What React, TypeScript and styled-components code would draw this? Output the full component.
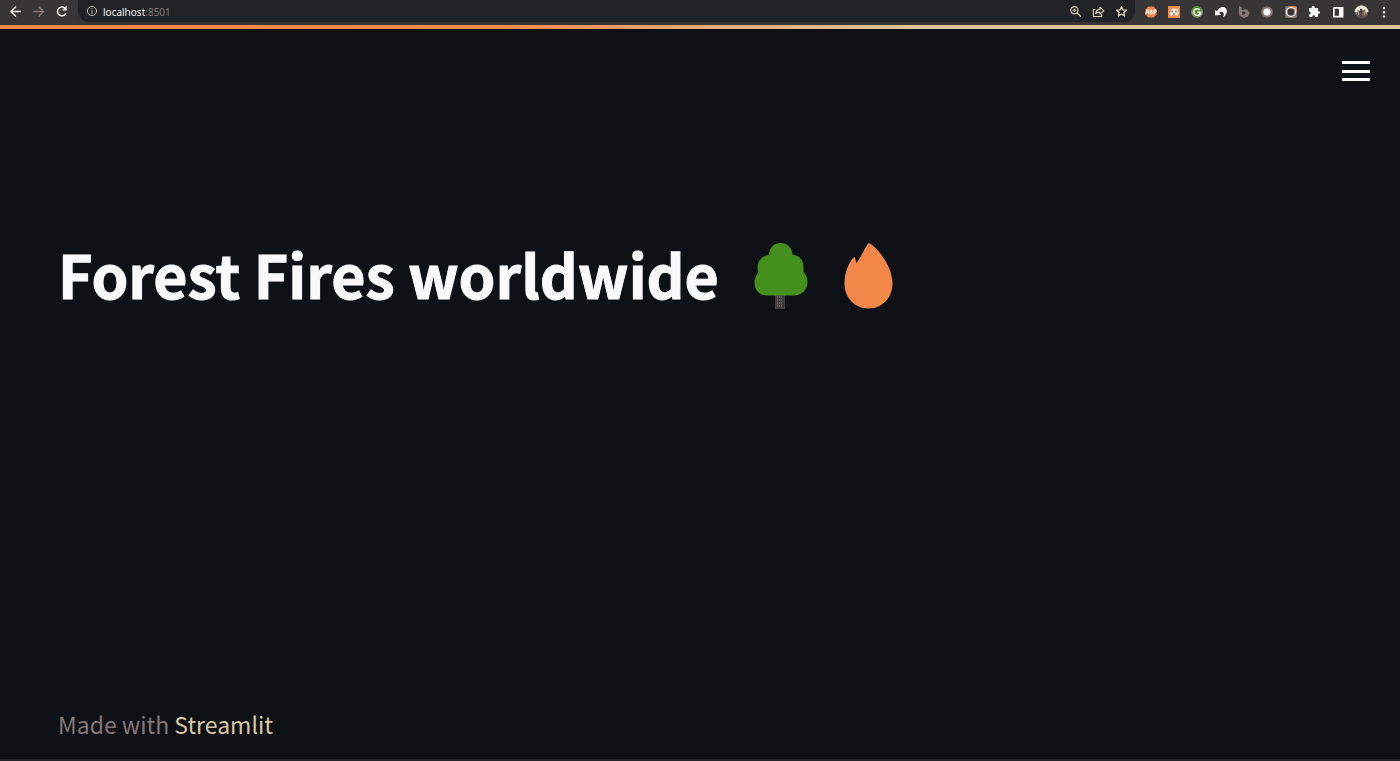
import React from "react";
import styled, { createGlobalStyle } from "styled-components";

const GlobalStyle = createGlobalStyle`
  * { box-sizing: border-box; }
  body { margin: 0; background: #0d1116; }
`;

const Page = styled.div`
  display: flex;
  flex-direction: column;
  min-height: 100vh;
  background: #0d1116;
  border-bottom: 2px solid #222327;
  font-family: "Noto Sans CJK SC", "Noto Sans", sans-serif;
`;

const BrowserBar = styled.header`
  display: flex;
  align-items: flex-start;
  height: 25px;
  background: #373536;
`;

const Navigation = styled.nav`
  display: flex;
  gap: 8px;
  padding: 4px 9px 4px 8px;
`;

const IconButton = styled.button<{ $muted?: boolean }>`
  display: flex;
  align-items: center;
  justify-content: center;
  flex: none;
  width: 15px;
  height: 15px;
  padding: 0;
  border: 0;
  background: none;
  color: ${(p) => (p.$muted ? "#857774" : "#f4f0e8")};
  cursor: pointer;

  svg { display: block; }
`;

const AddressBar = styled.div`
  display: flex;
  align-items: center;
  flex: 1;
  height: 22px;
  padding: 0 6px 0 8px;
  border-radius: 0 0 11px 11px;
  background: #202226;
  color: #d9cdb4;
`;

const SiteInfo = styled.span`
  display: flex;
  width: 12px;
  margin-right: 5px;
  color: #c4bbb0;
`;

const Url = styled.div`
  flex: 1;
  padding-top: 1px;
  font-family: "Noto Sans", "Open Sans", sans-serif;
  font-size: 10px;
  line-height: 14px;
  color: #857774;

  strong { font-weight: 400; color: #f7f5f0; }
`;

const AddressActions = styled.div`
  display: flex;
  gap: 8px;

  button { color: #e3d5b8; }
`;

const Extensions = styled.div`
  display: flex;
  justify-content: space-between;
  width: 265px;
  padding: 4px 8px;
`;

const AccentLine = styled.div`
  height: 4px;
  background: linear-gradient(90deg, #f58549 0%, #f28a50 36%, #e9a873 50%, #dcc79c 66%, #dcc79c 100%);
`;

const Toolbar = styled.div`
  display: flex;
  justify-content: flex-end;
  padding: 32px 30px 0;
`;

const MenuButton = styled.button`
  display: flex;
  flex-direction: column;
  justify-content: space-between;
  width: 28px;
  height: 20px;
  padding: 0;
  border: 0;
  background: none;
  cursor: pointer;
`;

const MenuStroke = styled.span`
  height: 3px;
  background: #fafafa;
`;

const Main = styled.main`
  flex: 1;
  padding: 151px 58px 0;
`;

const Title = styled.h1`
  display: flex;
  align-items: flex-start;
  margin: 0;
  color: #fafafc;
  font-size: 59px;
  font-weight: 700;
  line-height: 84px;
  -webkit-text-stroke: 1px #fafafc;

  svg { flex: none; }
`;

const TitleIcons = styled.span`
  display: flex;
  gap: 36px;
  padding-top: 11px;
  margin-left: 35px;
`;

const Footer = styled.footer`
  padding: 0 58px 17px;
  color: #857774;
  font-size: 23px;
  line-height: 36px;

  a { color: #dcc79c; text-decoration: none; }
`;

const stroke = {
  fill: "none",
  stroke: "currentColor",
  strokeWidth: 1.5,
  strokeLinecap: "round" as const,
  strokeLinejoin: "round" as const,
};

const BackIcon = () => (
  <svg width="15" height="15" viewBox="0 0 15 15" {...stroke}><path d="M12.5 7.5H3M7.5 3 3 7.5 7.5 12" /></svg>
);
const ForwardIcon = () => (
  <svg width="15" height="15" viewBox="0 0 15 15" {...stroke}><path d="M3 7.5h9M8 3l4.5 4.5L8 12" /></svg>
);
const ReloadIcon = () => (
  <svg width="15" height="15" viewBox="0 0 15 15" {...stroke}>
    <path d="M11.5 10A4.4 4.4 0 1 1 11 4.3L12 5.5" /><path d="M12.4 2.2v4H8.6z" fill="currentColor" strokeWidth=".4" />
  </svg>
);
const InfoIcon = () => (
  <svg width="12" height="12" viewBox="0 0 12 12" {...stroke} strokeWidth="1"><circle cx="6" cy="6" r="4.6" /><path d="M6 5.5v3M6 3.4v.3" /></svg>
);
const ZoomIcon = () => (
  <svg width="13" height="13" viewBox="0 0 13 13" {...stroke} strokeWidth="1.1"><circle cx="5.4" cy="5.2" r="3.6" /><path d="m8.2 8 3.4 3.4M3.9 5.2h3M5.4 3.7v3" /></svg>
);
const ShareIcon = () => (
  <svg width="13" height="13" viewBox="0 0 13 13" {...stroke} strokeWidth="1.1"><path d="M3 4.5H1.4v7h8.3V9.6M3.7 8.7c.3-2.8 1.6-4.2 4.2-4.3V2.2l3.9 3.6-3.9 3.4V7.1c-1.9 0-3.1.4-4.2 1.6z" /></svg>
);
const StarIcon = () => (
  <svg width="13" height="13" viewBox="0 0 13 13" {...stroke} strokeWidth="1.2"><path d="m6.5 1.5 1.4 3.3 3.6.3-2.7 2.4.8 3.5-3.1-1.9L3.4 11l.8-3.5-2.7-2.4 3.6-.3z" /></svg>
);
const AdblockIcon = () => (
  <svg width="14" height="14" viewBox="0 0 14 14">
    <path d="M4.5 1.5h5l3 3v5l-3 3h-5l-3-3v-5z" fill="#f58549" />
    <path d="M1.5 9.200 3 5h1l.6 4.200M2.300 7.600h2M6 9V5.200h1.400q1 .9 0 1.800H6h1.600q1 1 0 2zM10 9.200V5.200h1.500q1.400 1.100 0 2.200H10" fill="none" stroke="#f3e7d5" strokeWidth="1.200" />
  </svg>
);
const FoxIcon = () => (
  <svg width="14" height="14" viewBox="0 0 14 14">
    <path d="M1 1h12v12H1z" fill="#f58549" />
    <path d="m3 2.500 1 2h1L6 3l1.500 1L9 3l1 1.500L11.500 3l-.5 3 1 2-1.500 1.500v2L8 10H6l-2.500 1.500.3-2L2.500 8 4 6z" fill="#f7eee2" />
    <path d="M5 5.500v2M9 5.500v2M6 9h2" stroke="#a3522f" strokeWidth="1.200" />
  </svg>
);
const GreenIcon = () => (
  <svg width="14" height="14" viewBox="0 0 14 14">
    <circle cx="7" cy="7" r="5.8" fill="#a99c94" /><path d="M2 4a5.8 5.8 0 0 1 8-2l2 3-4 8-5-2z" fill="#458f1d" />
    <path d="M9.8 4.8A3.4 3.4 0 1 0 10 9V7.3H7.3" fill="none" stroke="#fafafa" strokeWidth="1.5" />
  </svg>
);
const SwoopIcon = () => (
  <svg width="14" height="14" viewBox="0 0 14 14">
    <path d="M1 10.500V5l2 1.300C5.200 1.800 10 .8 12 3.600c1.800 3 .6 7-3 8.700 1-1.700 1.300-4.400-.4-5.300-1.300-.6-2.700 0-3.400 1l2 1.700z" fill="#fafafa" />
  </svg>
);
const BingIcon = () => (
  <svg width="14" height="14" viewBox="0 0 14 14">
    <path d="m2 1 2.800 1v3l4.600-.8 3.400 3.600-1.800 3.800-4 1.400-5-2.500z" fill="#857774" /><path d="m5 6.500 3 .5.8 1.800-3.400 1.200z" fill="#373536" />
  </svg>
);
const OrbIcon = () => (
  <svg width="14" height="14" viewBox="0 0 14 14"><circle cx="7" cy="7" r="5.8" fill="#857774" /><circle cx="7" cy="7" r="3.6" fill="#fafafa" /></svg>
);
const RingIcon = () => (
  <svg width="14" height="14" viewBox="0 0 14 14">
    <rect x="1" y="1" width="12" height="12" rx="2" fill="#857774" /><path d="M5 1h6l2 2v5z" fill="#f58549" />
    <circle cx="7" cy="7" r="4.4" fill="#373536" stroke="#fafafa" strokeWidth="1.4" />
  </svg>
);
const PuzzleIcon = () => (
  <svg width="14" height="14" viewBox="0 0 14 14">
    <path d="M2 3h2.8c-.4-2.6 3.4-2.6 3 0H11v3c2.6-.3 2.6 3.2 0 3v3H8.2c.3-2.5-3.1-2.5-2.8 0H2V9.200c2.3.2 2.3-3 0-2.800z" fill="#fafafa" />
  </svg>
);
const SidePanelIcon = () => (
  <svg width="14" height="14" viewBox="0 0 14 14"><path d="M2 2h10.5v10.500H2zm1.700 1.700v7.100h4.200V3.700z" fill="#fafafa" fillRule="evenodd" /></svg>
);
const AvatarIcon = () => (
  <svg width="17" height="17" viewBox="0 0 17 17">
    <circle cx="8.5" cy="8.5" r="8" fill="#5c5453" />
    <path d="M.6 8.500A8 8 0 0 1 16.400 8.500l-2.600 1.500-1.800-4-2 2-2-3-2 3-1.500-1L2.500 10z" fill="#efe8da" />
    <path d="m2.500 11.500 2-4 .8 5M11.500 13l1-5 2 4" fill="none" stroke="#b7a99e" strokeWidth="1" /><path d="M7.300 5.500 9 8.500 8.500 15" fill="none" stroke="#373536" strokeWidth="1.500" /><path d="m9.500 9 1.200 1-1.200 5z" fill="#f58549" />
  </svg>
);
const MoreIcon = () => (
  <svg width="14" height="14" viewBox="0 0 14 14" fill="#fafafa"><circle cx="7" cy="3" r="1.2" /><circle cx="7" cy="7.2" r="1.2" /><circle cx="7" cy="11.4" r="1.2" /></svg>
);

const TreeIcon = () => (
  <svg width="54" height="66" viewBox="0 0 54 66" role="img" aria-label="Tree">
    <path d="M21 50h10v16H21z" fill="#3f3b3c" />
    <path d="M23 54h6M23 57h6M23 60h6M23 63h6" stroke="#9b8984" strokeWidth="1" strokeDasharray="1 1" />
    <path d="M26.500 0C33 0 38 4.500 38.500 11.500C44.500 12 49.500 17 49.500 23.500V29C51.800 31.500 53.500 35 53.500 39C53.500 47 47.500 52.500 40 52.500H13C5.500 52.500 .5 47 .5 39.500C.5 35.500 2 32 4.500 29.500C3.800 28 3.500 26.300 3.500 24.500C3.500 17.500 8.500 12.500 15 12C15.300 4.500 20 0 26.500 0Z" fill="#458f1d" />
  </svg>
);
const FlameIcon = () => (
  <svg width="49" height="66" viewBox="0 0 49 66" role="img" aria-label="Fire">
    <path d="M24 .8Q25 -.2 27 1C37 9 48.500 25 48.500 40.500C48.500 54.500 38.500 65.500 24.500 65.500C10.500 65.500 .5 54.500 .5 40.500C.5 29.500 5 19.500 9.500 14.500Q10.500 13.500 11 15L12.500 20C16.500 15 20.500 5.500 24 .8Z" fill="#f28749" />
  </svg>
);

const extensions = [
  { label: "Ad blocker", Icon: AdblockIcon },
  { label: "Fox", Icon: FoxIcon },
  { label: "Grammar check", Icon: GreenIcon },
  { label: "Redirect", Icon: SwoopIcon },
  { label: "Search", Icon: BingIcon },
  { label: "Recorder", Icon: OrbIcon },
  { label: "Capture", Icon: RingIcon },
  { label: "Extensions", Icon: PuzzleIcon },
  { label: "Side panel", Icon: SidePanelIcon },
  { label: "Profile", Icon: AvatarIcon },
  { label: "More", Icon: MoreIcon },
];

export default function App() {
  return (
    <>
      <GlobalStyle />
      <Page>
        <BrowserBar>
          <Navigation aria-label="Browser">
            <IconButton aria-label="Back"><BackIcon /></IconButton>
            <IconButton aria-label="Forward" $muted><ForwardIcon /></IconButton>
            <IconButton aria-label="Reload"><ReloadIcon /></IconButton>
          </Navigation>
          <AddressBar>
            <SiteInfo><InfoIcon /></SiteInfo>
            <Url><strong>localhost</strong>:8501</Url>
            <AddressActions>
              <IconButton aria-label="Zoom"><ZoomIcon /></IconButton>
              <IconButton aria-label="Share"><ShareIcon /></IconButton>
              <IconButton aria-label="Bookmark"><StarIcon /></IconButton>
            </AddressActions>
          </AddressBar>
          <Extensions>
            {extensions.map(({ label, Icon }) => (
              <IconButton key={label} aria-label={label}><Icon /></IconButton>
            ))}
          </Extensions>
        </BrowserBar>
        <AccentLine />
        <Toolbar>
          <MenuButton aria-label="Menu"><MenuStroke /><MenuStroke /><MenuStroke /></MenuButton>
        </Toolbar>
        <Main>
          <Title>
            Forest Fires worldwide
            <TitleIcons><TreeIcon /><FlameIcon /></TitleIcons>
          </Title>
        </Main>
        <Footer>Made with <a href="#streamlit">Streamlit</a></Footer>
      </Page>
    </>
  );
}
